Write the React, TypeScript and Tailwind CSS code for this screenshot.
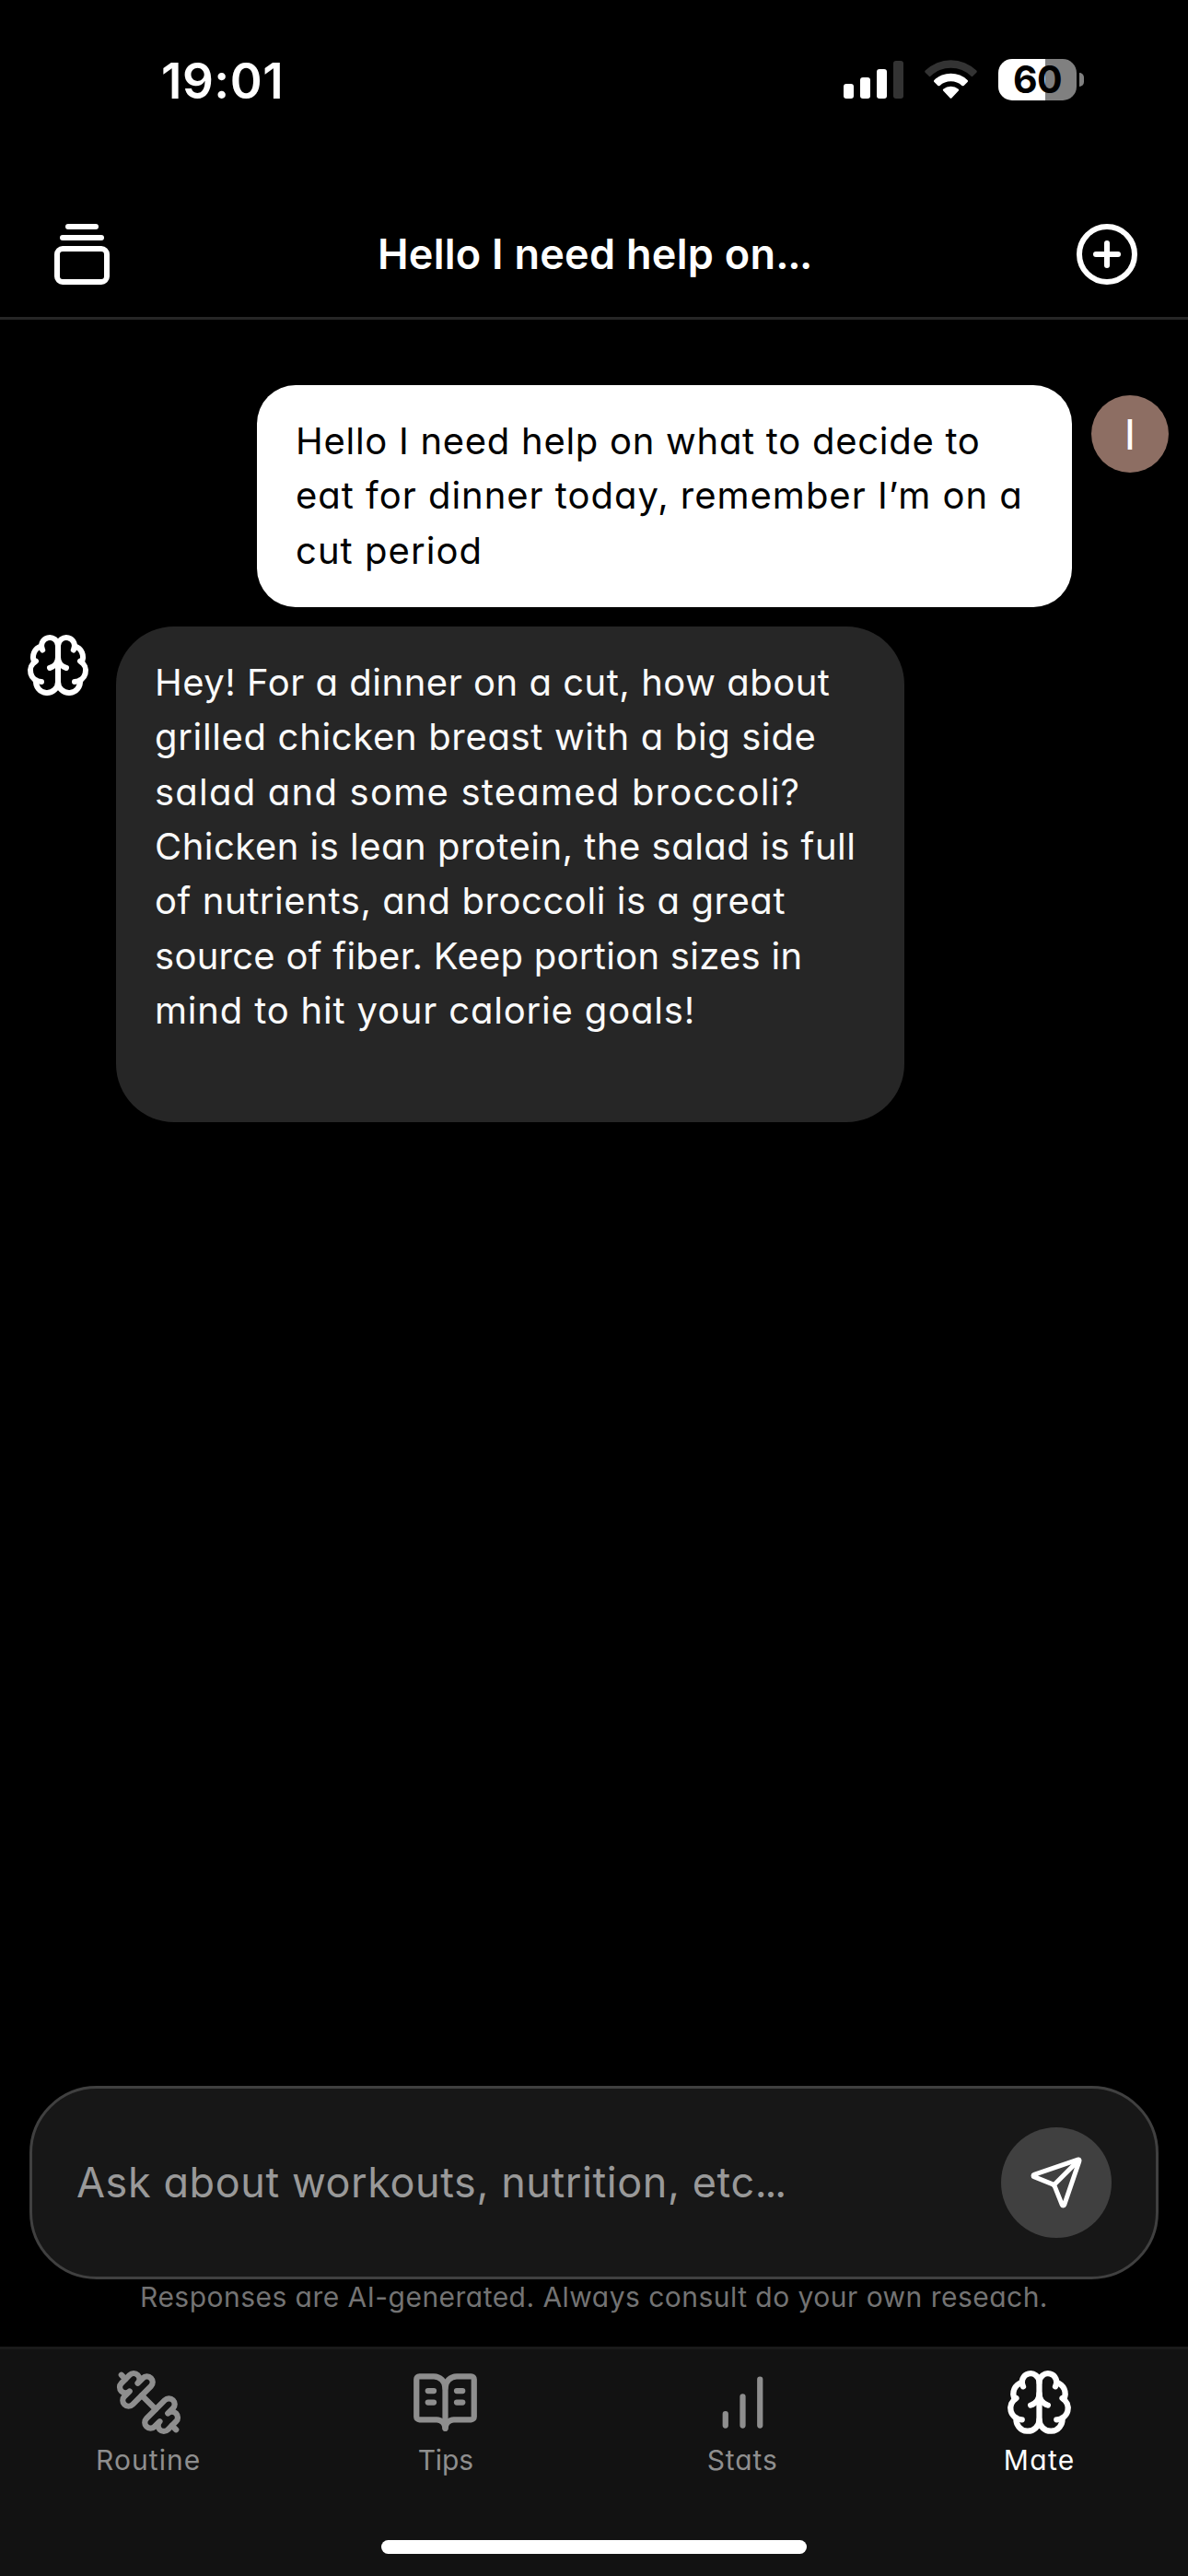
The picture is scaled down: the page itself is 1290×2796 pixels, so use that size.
import type { ReactNode } from "react";
import { BookOpenText, Brain, CirclePlus, GalleryVerticalEnd, Send } from "lucide-react";

type TextLine = { text: string; tracking: string };

const userLines: TextLine[] = [
  { text: "Hello I need help on what to decide to", tracking: "tracking-[0.72px]" },
  { text: "eat for dinner today, remember I’m on a", tracking: "tracking-[0.98px]" },
  { text: "cut period", tracking: "tracking-[1.05px]" },
];

const replyLines: TextLine[] = [
  { text: "Hey! For a dinner on a cut, how about", tracking: "tracking-[0.52px]" },
  { text: "grilled chicken breast with a big side", tracking: "tracking-[0.66px]" },
  { text: "salad and some steamed broccoli?", tracking: "tracking-[1.22px]" },
  { text: "Chicken is lean protein, the salad is full", tracking: "tracking-[0.49px]" },
  { text: "of nutrients, and broccoli is a great", tracking: "tracking-[0.57px]" },
  { text: "source of fiber. Keep portion sizes in", tracking: "tracking-[0.27px]" },
  { text: "mind to hit your calorie goals!", tracking: "tracking-[0.82px]" },
];

function Lines({ lines }: { lines: TextLine[] }) {
  return (
    <>
      {lines.map((line) => (
        <p key={line.text} className={`whitespace-nowrap ${line.tracking}`}>
          {line.text}
        </p>
      ))}
    </>
  );
}

function StatusBar() {
  return (
    <div className="flex h-[176px] items-center justify-between pr-[113px] pl-[175px]">
      <span className="text-[53px] leading-none font-semibold tracking-[0.5px]">19:01</span>
      <div className="-mt-[3px] flex items-center">
        <svg width="65" height="45" viewBox="0 0 65 45" fill="#fff">
          <rect x="0" y="27" width="11" height="16" rx="3" />
          <rect x="18" y="20" width="11" height="23" rx="3" />
          <rect x="36" y="11" width="11" height="32" rx="3" />
          <rect x="54" y="2" width="11" height="41" rx="3" fill="#333" />
        </svg>
        <svg className="ml-[23px]" width="57" height="45" viewBox="0 0 57 45" fill="#fff">
          <path
            d="M.7 12.6 A 39.5 39.5 0 0 1 56.3 12.6 Q57.3 13.6 56.3 14.7 L52.2 18.8 Q51.5 19.5 50.6 18.7 A 31.5 31.5 0 0 0 6.4 18.7 Q5.5 19.5 4.8 18.8 L.7 14.7 Q-.3 13.6 .7 12.6Z"
            fill="#333"
          />
          <path d="M10.4 23 A 26 26 0 0 1 46.6 23 Q47.5 24 46.6 24.9 L42.6 28.9 Q41.6 29.8 40.5 28.9 A 18 18 0 0 0 16.5 28.9 Q15.4 29.8 14.4 28.9 L10.4 24.9 Q9.5 24 10.4 23Z" />
          <path d="M20.2 32.8 A 13 13 0 0 1 36.8 32.8 Q37.7 33.7 36.8 34.6 L29.3 42.4 Q28.5 43.2 27.7 42.4 L20.2 34.6 Q19.3 33.7 20.2 32.8Z" />
        </svg>
        <div className="ml-[23px] flex h-[45px] w-[85px] items-center justify-center rounded-[15px] bg-[linear-gradient(to_right,#fff_60%,#808080_60%)]">
          <span className="text-[41px] leading-none font-bold tracking-[-0.6px] text-black">60</span>
        </div>
        <div className="ml-[3px] h-[15px] w-[5px] rounded-r-full bg-[#808080]" />
      </div>
    </div>
  );
}

function Header() {
  return (
    <header className="flex h-[171px] items-start justify-between border-b-[3px] border-neutral-800 pt-16 pr-[52px] pl-[53px]">
      <GalleryVerticalEnd size={72} strokeWidth={2} />
      <h1 className="text-[45px] leading-[72px] font-semibold tracking-[0.28px]">
        Hello I need help on<span className="tracking-[-1.4px]">...</span>
      </h1>
      <CirclePlus size={72} strokeWidth={2} />
    </header>
  );
}

function TabIcon({ children }: { children: ReactNode }) {
  return (
    <svg
      width="75"
      height="75"
      viewBox="0 0 24 24"
      fill="none"
      stroke="currentColor"
      strokeWidth="2"
      strokeLinecap="round"
      strokeLinejoin="round"
    >
      {children}
    </svg>
  );
}

function DumbbellIcon() {
  return (
    <TabIcon>
      <path d="M14.4 14.4 9.6 9.6" />
      <path d="M18.657 21.485a2 2 0 1 1-2.829-2.828l-1.767 1.768a2 2 0 1 1-2.829-2.829l6.364-6.364a2 2 0 1 1 2.829 2.829l-1.768 1.767a2 2 0 1 1 2.828 2.829z" />
      <path d="m21.5 21.5-1.4-1.4" />
      <path d="M3.9 3.9 2.5 2.5" />
      <path d="M6.404 12.768a2 2 0 1 1-2.829-2.829l1.768-1.767a2 2 0 1 1-2.828-2.829l2.828-2.828a2 2 0 1 1 2.829 2.828l1.767-1.768a2 2 0 1 1 2.829 2.829z" />
    </TabIcon>
  );
}

function BarsIcon() {
  return (
    <TabIcon>
      <path d="M6 20v-4M12 20V10M18 20V4" />
    </TabIcon>
  );
}

function Tab({
  icon,
  label,
  tracking,
  active = false,
}: {
  icon: ReactNode;
  label: string;
  tracking: string;
  active?: boolean;
}) {
  return (
    <button
      className={`flex flex-1 flex-col items-center ${active ? "text-white" : "text-[#8e8e8e]"}`}
    >
      {icon}
      <span className={`mt-[3px] text-[30px] leading-[44px] ${tracking}`}>{label}</span>
    </button>
  );
}

export default function App() {
  return (
    <div className="flex h-[2796px] w-[1290px] flex-col overflow-hidden bg-black font-['Inter',sans-serif] text-white [font-feature-settings:'cv11']">
      <StatusBar />
      <Header />

      <main className="flex flex-1 flex-col pt-[71px]">
        <div className="flex items-start justify-end gap-[21px] pr-[21px]">
          <div className="h-[241px] w-[885px] rounded-[42px] bg-white pt-[31px] pl-[42px] text-[40px] leading-[59.333px] text-black">
            <Lines lines={userLines} />
          </div>
          <div className="mt-[11px] flex size-[84px] items-center justify-center rounded-full bg-[#8d6e63] font-['Roboto'] text-[47px] leading-none">
            I
          </div>
        </div>

        <div className="mt-[21px] flex items-start pl-[27px]">
          <Brain className="mt-[6px]" size={72} strokeWidth={2} />
          <div className="ml-[27px] h-[538px] w-[856px] rounded-[63px] bg-neutral-800 pt-[31px] pl-[42px] text-[40px] leading-[59.333px] text-neutral-50">
            <Lines lines={replyLines} />
          </div>
        </div>
      </main>

      <div className="px-8">
        <div className="flex h-[210px] items-center justify-between rounded-[73px] border-[3px] border-neutral-700 bg-neutral-900 pr-12 pl-12">
          <span className="-mt-[2px] text-[45px] leading-none tracking-[0.57px] text-[#999]">
            Ask about workouts, nutrition, etc<span className="tracking-[-2.2px]">...</span>
          </span>
          <button className="flex size-[120px] items-center justify-center rounded-full bg-neutral-700">
            <Send size={60} strokeWidth={2} />
          </button>
        </div>
        <p className="h-[73px] text-center text-[30px] leading-[38px] tracking-[0.47px] text-neutral-500">
          Responses are AI-generated. Always consult do your own reseach.
        </p>
      </div>

      <nav className="flex h-[249px] flex-col items-center border-t-[3px] border-[#1a1a1a] bg-[#121212] pt-5">
        <div className="flex w-full">
          <Tab label="Routine" tracking="tracking-[1.07px]" icon={<DumbbellIcon />} />
          <Tab
            label="Tips"
            tracking="tracking-[-0.15px]"
            icon={<BookOpenText size={75} strokeWidth={2} />}
          />
          <Tab label="Stats" tracking="tracking-[0.92px]" icon={<BarsIcon />} />
          <Tab
            label="Mate"
            tracking="tracking-[1.33px]"
            icon={<Brain size={75} strokeWidth={2} />}
            active
          />
        </div>
        <div className="mt-[65px] h-[15px] w-[462px] rounded-full bg-white" />
      </nav>
    </div>
  );
}
